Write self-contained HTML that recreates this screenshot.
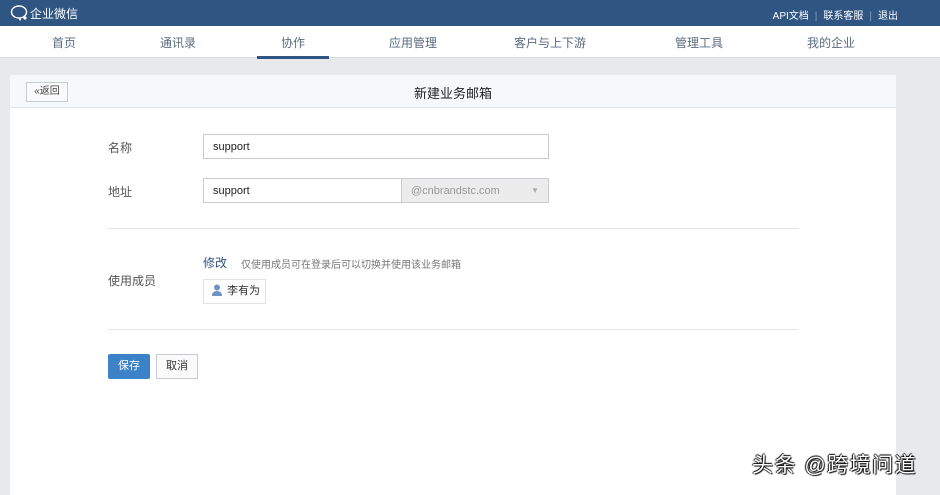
<!DOCTYPE html>
<html><head><meta charset="utf-8"><style>
*{margin:0;padding:0;box-sizing:border-box}
body{width:940px;height:490px;overflow:hidden;background:#e8e9eb;font-family:"Liberation Sans","Noto Sans CJK SC",sans-serif;position:relative;font-size:12px;color:#333}
.top{position:absolute;left:0;top:0;width:940px;height:26px;background:#2f5583;color:#fff}
.logo{position:absolute;left:10px;top:5px;font-size:12px}
.links{position:absolute;right:42px;top:7px;font-size:10px;color:#fff}
.links span{color:#8aa0bd;margin:0 6px}
.nav{position:absolute;left:0;top:26px;width:940px;height:32px;background:#fff;border-bottom:1px solid #dcdde0}
.nav div{position:absolute;top:8px;font-size:12px;color:#5b6b80;transform:translateX(-50%)}
.ul{position:absolute;left:257px;top:56px;width:72px;height:3px;background:#2f5583}
.card{position:absolute;left:10px;top:75px;width:886px;height:420px;background:#fff}
.ch{height:33px;background:#f7f8fa;border-bottom:1px solid #e4e6e9;position:relative}
.back{position:absolute;left:16px;top:7px;width:42px;height:20px;border:1px solid #c9ccd1;background:#fafafa;font-size:10px;line-height:18px;text-align:center;color:#444}
.title{position:absolute;left:0;right:0;top:8px;text-align:center;font-size:13px;color:#222}
.abs{position:absolute}
.lbl{color:#555;font-size:12px}
.inp{border:1px solid #c8cbd0;height:25px;line-height:23px;padding-left:9px;font-size:11px;color:#222;background:#fff}
.hr{position:absolute;left:108px;width:690px;height:1px;background:#e3e5e8}
.wm{position:absolute;left:752px;top:449px;font-size:21px;color:#fff;text-shadow:1px 1px 1px #000,-1px 0 1px #000,0 -1px 1px #000;letter-spacing:1.5px}
</style></head><body>
<div class="top"><div class="logo"><svg width="20" height="16" viewBox="0 0 20 16" style="vertical-align:-3px"><ellipse cx="9" cy="7" rx="7.5" ry="6" fill="none" stroke="#fff" stroke-width="1.4"/><circle cx="15" cy="13" r="1.6" fill="#fff"/><circle cx="10" cy="14.5" r="1" fill="#fff"/></svg>企业微信</div>
<div class="links">API文档<span>|</span>联系客服<span>|</span>退出</div></div>
<div class="nav">
<div style="left:64px">首页</div><div style="left:178px">通讯录</div><div style="left:293px">协作</div><div style="left:413px">应用管理</div><div style="left:550px">客户与上下游</div><div style="left:699px">管理工具</div><div style="left:831px">我的企业</div>
</div>
<div class="ul"></div>
<div class="card"><div class="ch"><div class="back">«返回</div><div class="title">新建业务邮箱</div></div></div>
<div class="abs lbl" style="left:108px;top:139px">名称</div>
<div class="abs inp" style="left:203px;top:134px;width:346px;line-height:24px">support</div>
<div class="abs lbl" style="left:108px;top:183px">地址</div>
<div class="abs inp" style="left:203px;top:178px;width:199px;line-height:24px">support</div>
<div class="abs inp" style="left:401px;top:178px;width:148px;background:#ececec;color:#999;line-height:24px">@cnbrandstc.com<span style="position:absolute;right:9px;font-size:8px;color:#aaa">▼</span></div>
<div class="hr" style="top:228px"></div>
<div class="abs lbl" style="left:108px;top:272px">使用成员</div>
<div class="abs" style="left:203px;top:254px;font-size:12px;color:#2f5583">修改</div>
<div class="abs" style="left:241px;top:256px;font-size:10px;color:#777">仅使用成员可在登录后可以切换并使用该业务邮箱</div>
<div class="abs" style="left:203px;top:279px;width:63px;height:25px;border:1px solid #e0e2e5;font-size:11px;line-height:23px;padding-left:7px"><svg width="12" height="12" viewBox="0 0 12 12" style="vertical-align:-2px;margin-right:4px"><circle cx="6" cy="3.5" r="3" fill="#6c93c4"/><path d="M1 12 Q1 7 6 7 Q11 7 11 12Z" fill="#6c93c4"/></svg>李有为</div>
<div class="hr" style="top:329px"></div>
<div class="abs" style="left:108px;top:354px;width:42px;height:25px;background:#3b82c8;color:#fff;font-size:11px;line-height:25px;text-align:center;border-radius:2px">保存</div>
<div class="abs" style="left:156px;top:354px;width:42px;height:25px;border:1px solid #c8cbd0;background:#fafafa;font-size:11px;line-height:23px;text-align:center">取消</div>
<div class="wm">头条 @跨境问道</div>
</body></html>
